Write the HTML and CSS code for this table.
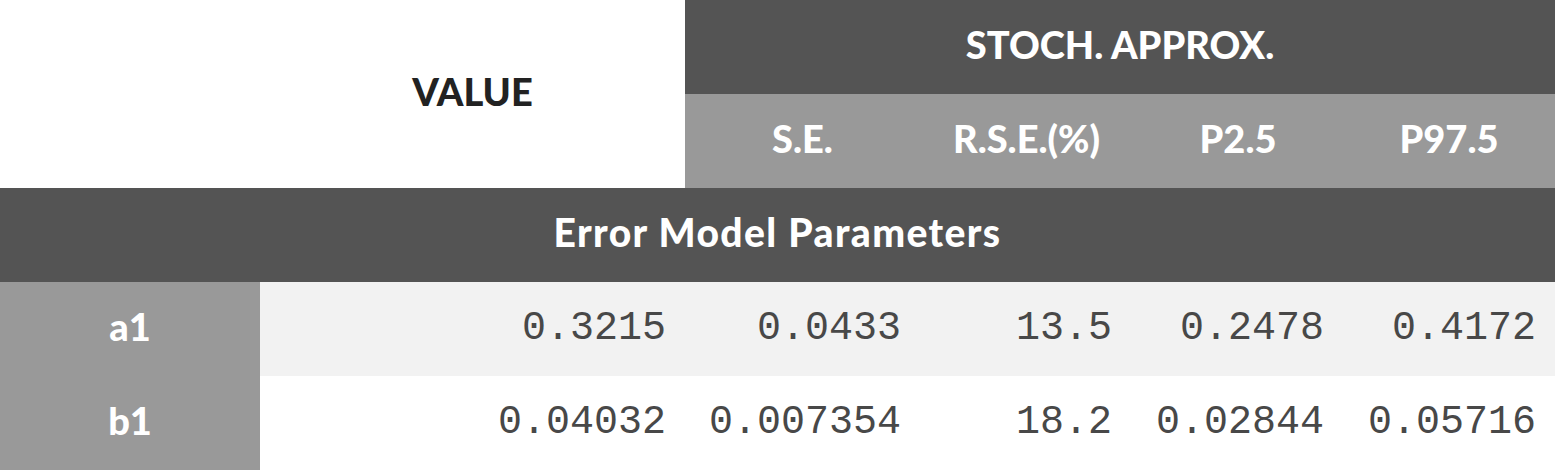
FILE: index.html
```html
<!DOCTYPE html>
<html>
<head>
<meta charset="utf-8">
<link rel="stylesheet" href="styles.css">
</head>
<body>
<table class="est">
  <colgroup>
    <col class="c-name">
    <col class="c-value">
    <col class="c-se">
    <col class="c-rse">
    <col class="c-p25">
    <col class="c-p975">
  </colgroup>
  <thead>
    <tr class="hrow">
      <th class="blank" rowspan="2"></th>
      <th class="blank value-h" rowspan="2">VALUE</th>
      <th class="dark" colspan="4">STOCH. APPROX.</th>
    </tr>
    <tr class="hrow">
      <th class="light">S.E.</th>
      <th class="light">R.S.E.(%)</th>
      <th class="light">P2.5</th>
      <th class="light">P97.5</th>
    </tr>
  </thead>
  <tbody>
    <tr class="hrow">
      <th class="dark section" colspan="6">Error Model Parameters</th>
    </tr>
    <tr class="drow odd">
      <th class="pname">a1</th>
      <td>0.3215</td>
      <td>0.0433</td>
      <td>13.5</td>
      <td>0.2478</td>
      <td>0.4172</td>
    </tr>
    <tr class="drow">
      <th class="pname">b1</th>
      <td>0.04032</td>
      <td>0.007354</td>
      <td>18.2</td>
      <td>0.02844</td>
      <td>0.05716</td>
    </tr>
  </tbody>
</table>
</body>
</html>
```
FILE: styles.css
```css
html, body {
  margin: 0;
  padding: 0;
  background: #ffffff;
}

.est {
  width: 1555px;
  border-collapse: collapse;
  table-layout: fixed;
  font-family: "Lato", "Liberation Sans", sans-serif;
}

.c-name { width: 260px; }
.c-value { width: 425px; }
.c-se { width: 235px; }
.c-rse { width: 213px; }
.c-p25 { width: 210px; }
.c-p975 { width: 212px; }

.est th,
.est td {
  padding: 0;
  height: 94px;
  box-sizing: border-box;
}

.est th {
  font-weight: 900;
  font-size: 38px;
  text-align: center;
  letter-spacing: 0;
  padding-bottom: 6px;
}

.blank {
  background: #ffffff;
  color: #222222;
}

.dark {
  background: #545454;
  color: #ffffff;
}

.est .section {
  font-size: 39px;
  letter-spacing: 1.4px;
}

.light {
  background: #999999;
  color: #ffffff;
}

.pname {
  background: #999999;
  color: #ffffff;
}

.drow td {
  font-family: "Liberation Mono", "Courier New", monospace;
  font-size: 40px;
  color: #484848;
  text-align: right;
  padding-right: 19px;
  padding-bottom: 2px;
}

.drow td:nth-child(4) {
  padding-right: 21px;
}

.odd td {
  background: #f2f2f2;
}
```
